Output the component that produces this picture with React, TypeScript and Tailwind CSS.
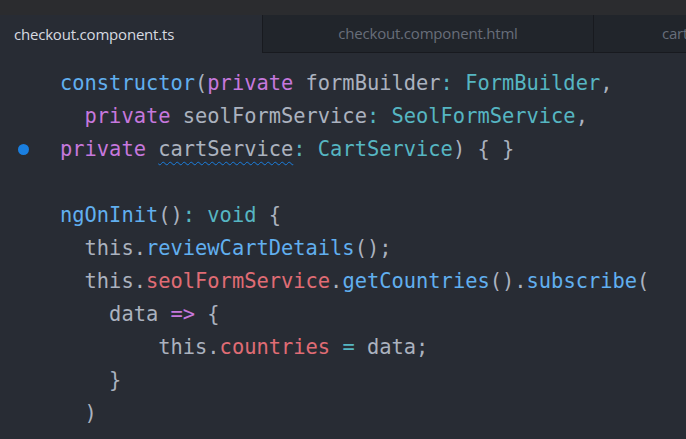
import React from "react";

type Tok = [string, string];

const C = {
  kw: "text-[#c678dd]",
  fn: "text-[#61afef]",
  ty: "text-[#56b6c2]",
  tx: "text-[#abb2bf]",
  pr: "text-[#e06c75]",
};

const lines: { indent: number; toks: Tok[]; dot?: boolean }[] = [
  {
    indent: 0,
    toks: [
      ["constructor", C.fn],
      ["(", C.tx],
      ["private", C.kw],
      [" formBuilder", C.tx],
      [": ", C.ty],
      ["FormBuilder", C.ty],
      [",", C.tx],
    ],
  },
  {
    indent: 2,
    toks: [
      ["private", C.kw],
      [" seolFormService", C.tx],
      [": ", C.ty],
      ["SeolFormService", C.ty],
      [",", C.tx],
    ],
  },
  {
    indent: 0,
    dot: true,
    toks: [
      ["private", C.kw],
      [" ", C.tx],
      ["cartService", "squiggle"],
      [": ", C.ty],
      ["CartService", C.ty],
      [") { }", C.tx],
    ],
  },
  { indent: 0, toks: [] },
  {
    indent: 0,
    toks: [
      ["ngOnInit", C.fn],
      ["()", C.tx],
      [": ", C.ty],
      ["void", C.ty],
      [" {", C.tx],
    ],
  },
  {
    indent: 2,
    toks: [
      ["this.", C.tx],
      ["reviewCartDetails", C.fn],
      ["();", C.tx],
    ],
  },
  {
    indent: 2,
    toks: [
      ["this.", C.tx],
      ["seolFormService", C.pr],
      [".", C.tx],
      ["getCountries", C.fn],
      ["().", C.tx],
      ["subscribe", C.fn],
      ["(", C.tx],
    ],
  },
  {
    indent: 4,
    toks: [
      ["data ", C.tx],
      ["=>", C.kw],
      [" {", C.tx],
    ],
  },
  {
    indent: 8,
    toks: [
      ["this.", C.tx],
      ["countries", C.pr],
      [" = ", C.ty],
      ["data;", C.tx],
    ],
  },
  { indent: 4, toks: [["}", C.tx]] },
  { indent: 2, toks: [[")", C.tx]] },
];

export default function App() {
  return (
    <div className="w-[686px] h-[439px] overflow-hidden bg-[#282c34] flex flex-col">
      {/* tab bar */}
      <div className="bg-[#2b2c2f] pt-[15px] shrink-0">
        <div className="flex h-[38px] bg-[#21252b] font-['Open_Sans',sans-serif] text-[15px] tracking-[-0.2px]">
          <div className="w-[262px] bg-[#282c34] pl-[14px] flex items-center text-[#d7dae0]">
            checkout.component.ts
          </div>
          <div className="w-[331px] border-l border-b border-[#181a1f] flex items-center justify-center text-[#686e7a]">
            checkout.component.html
          </div>
          <div className="flex-1 border-l border-b border-[#181a1f] pl-[68px] flex items-center text-[#686e7a] overflow-hidden whitespace-nowrap">
            cart.component.ts
          </div>
        </div>
      </div>

      {/* editor */}
      <div className="pt-[14px] font-['DejaVu_Sans_Mono',monospace] text-[20.4px] leading-[33px] whitespace-pre">
        {lines.map((l, i) => (
          <div key={i} className="flex h-[33px] items-center">
            <div className="w-[60px] flex items-center">
              {l.dot && (
                <span className="ml-[18px] w-[11px] h-[11px] rounded-full bg-[#1a7fe0]" />
              )}
            </div>
            <div>
              {" ".repeat(l.indent)}
              {l.toks.map(([t, c], j) =>
                c === "squiggle" ? (
                  <span
                    key={j}
                    className="text-[#abb2bf] underline decoration-wavy decoration-[#1a7fe0] decoration-1 underline-offset-[5px]"
                  >
                    {t}
                  </span>
                ) : (
                  <span key={j} className={c}>
                    {t}
                  </span>
                )
              )}
            </div>
          </div>
        ))}
      </div>
    </div>
  );
}
